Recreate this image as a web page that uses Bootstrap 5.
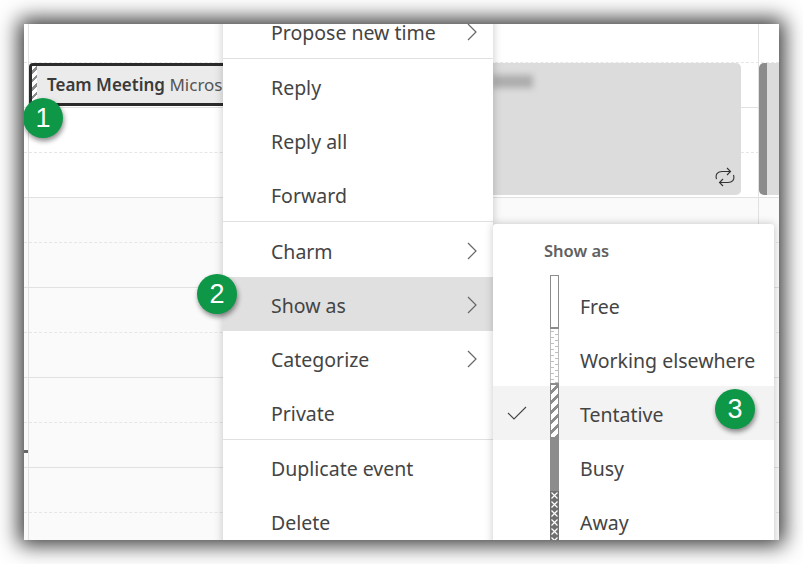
<!DOCTYPE html>
<html lang="en">
<head>
    <meta charset="UTF-8">
    <title>Show as</title>
    <link href="https://cdn.jsdelivr.net/npm/bootstrap@5.3.3/dist/css/bootstrap.min.css" rel="stylesheet">
    <style>
        body { background: #fff; font-family: "Noto Sans", sans-serif; min-height: 564px; padding: 24px 0 0 24px; }
        .shot { width: 755px; height: 516px; overflow: hidden; background: #fff; box-shadow: 0 0 20px 5px rgba(0,0,0,.8); }
        .shot-wrap { position: relative; width: 755px; height: 516px; }

        /* calendar grid */
        .cal-row { height: 45px; border-bottom: 1px solid #e1e1e1; }
        .cal-row.dash { border-bottom: 1px dashed #e6e6e6; }
        .cal-row.top { height: 39px; }
        .cal-row.off { background: #fafafa; }
        .v-line { position: absolute; top: 0; bottom: 0; width: 1px; background: #e1e1e1; }
        .v-left { left: 4px; }
        .v-right { left: 734px; }
        .tick { position: absolute; left: 0; top: 426px; width: 4px; height: 3px; background: #666; }

        /* events */
        .ev-tent { position: absolute; left: 5px; top: 39px; width: 194px; height: 43px; border: 3px solid #2b2b2b; border-right: 0; border-radius: 4px 0 0 4px; background: #ebebeb; font-size: 17px; color: #444; padding: 1px 0 0 15px; line-height: 35px; white-space: nowrap; overflow: hidden; }
        .ev-tent::before { content: ""; position: absolute; left: 0; top: 0; bottom: 0; width: 5px; background: repeating-linear-gradient(135deg, #fff 0 3.500px, #8c8c8c 3.500px 6px); }
        .ev-tent b { font-weight: 600; color: #3a3a3a; }
        .ev-tent span { color: #555; }
        .ev-busy { position: absolute; left: 460px; top: 39px; width: 257px; height: 132px; background: #dcdcdc; border-radius: 0 5px 5px 0; }
        .ev-blur { position: absolute; left: 8px; top: 12px; width: 41px; height: 13px; background: #adadad; filter: blur(3px); }
        .ev-icon { position: absolute; right: 6px; bottom: 8px; }
        .ev-next { position: absolute; left: 735px; top: 39px; width: 40px; height: 132px; background: #dcdcdc; border-left: 8px solid #8c8c8c; border-radius: 5px 0 0 5px; }

        /* menus */
        .menu-main, .menu-sub { border: 0; border-radius: 0; padding: 0; margin: 0; font-size: 19.5px; color: #444; box-shadow: 0 0 9px rgba(0,0,0,.22); }
        .menu-main { position: absolute; left: 199px; top: -20px; width: 270px; }
        .menu-sub { position: absolute; left: 469px; top: 200px; width: 281px; border-radius: 3px 3px 0 0; }
        .menu-main .dropdown-item, .menu-sub .dropdown-item { height: 54px; padding: 0; color: #444; display: flex; align-items: center; line-height: 1.05; }
        .menu-main .dropdown-item { padding: 5px 15px 0 48px; justify-content: space-between; }
        .menu-main .dropdown-item svg { margin-bottom: 4px; }
        .dropdown-divider.menu-rule { margin: 0; border-color: #e1e1e1; opacity: 1; }
        .rule-1 { height: 1px; }
        .rule-2 { height: 2px; }
        .dropdown-item.is-open { background: #e0e0e0; }
        .dropdown-item.is-sel { background: #f3f3f3; }
        .sub-title { height: 54px; padding: 0 0 0 51px; line-height: 54px; font-size: 16.500px; font-weight: 600; color: #616161; }
        .check-cell { width: 57px; display: flex; justify-content: center; padding-right: 9px; }
        .status-seg { width: 9px; align-self: stretch; margin: -3px 0 3px; flex: none; }
        .seg-free { background: #fff; border: 1px solid #8c8c8c; border-bottom-width: 2px; }
        .seg-work { border: 1px solid #bdbdbd; border-width: 0 1px; background-color: #fff; background-image: linear-gradient(#bfbfbf 0 1px, transparent 1px), linear-gradient(#bfbfbf 0 1px, transparent 1px); background-size: 3px 6px, 3px 6px; background-position: 0 2px, 4px 5px; background-repeat: repeat-y; }
        .seg-tent { border: 1px solid #8c8c8c; border-width: 2px 1px 0; background: repeating-linear-gradient(135deg, #fff 0 4px, #8c8c8c 4px 7px); }
        .seg-busy { background: #8c8c8c; }
        .seg-away { background: #6f6f6f; overflow: hidden; }
        .seg-away svg { display: block; }
        .item-label { margin-left: 21px; padding-top: 5px; }

        /* numbered callouts */
        .callout { position: absolute; z-index: 1001; width: 40px; height: 40px; border-radius: 50%; background: #0d9747; color: #fff; font-family: "Liberation Sans", sans-serif; font-size: 27px; line-height: 40px; text-align: center; box-shadow: 1px 3px 5px rgba(0,0,0,.45); }
        .call-1 { left: -1px; top: 74px; }
        .call-2 { left: 173px; top: 250px; }
        .call-3 { left: 691px; top: 365px; }
    </style>
</head>
<body>
    <div class="shot">
        <div class="shot-wrap">
            <div class="cal-lines">
                <div class="cal-row dash top"></div>
                <div class="cal-row"></div>
                <div class="cal-row dash"></div>
                <div class="cal-row"></div>
                <div class="cal-row dash off"></div>
                <div class="cal-row off"></div>
                <div class="cal-row dash off"></div>
                <div class="cal-row off"></div>
                <div class="cal-row dash off"></div>
                <div class="cal-row off"></div>
                <div class="cal-row dash off"></div>
                <div class="cal-row off"></div>
            </div>
            <div class="v-line v-left"></div>
            <div class="v-line v-right"></div>
            <div class="tick"></div>

            <div class="ev-tent"><b>Team Meeting</b> <span>Micros</span></div>
            <div class="ev-busy">
                <div class="ev-blur"></div>
                <svg class="ev-icon" width="20" height="20" viewBox="0 0 20 20" fill="none" stroke="#333" stroke-width="1.1">
                    <path d="M1.500 12 C0 7 3 4.500 7 4.500 H15 M12 1 L15.500 4.500 L12 8"/>
                    <path d="M18.500 8 C20 13 17 15.500 13 15.500 H5 M8 12 L4.500 15.500 L8 19"/>
                </svg>
            </div>
            <div class="ev-next"></div>

            <div class="dropdown-menu show menu-main">
                <a class="dropdown-item" href="#">Propose new time <svg width="11" height="18" viewBox="0 0 11 18" fill="none" stroke="#666" stroke-width="1.2"><path d="M1 1 L9 9 L1 17"/></svg></a>
                <hr class="dropdown-divider menu-rule rule-1">
                <a class="dropdown-item" href="#">Reply</a>
                <a class="dropdown-item" href="#">Reply all</a>
                <a class="dropdown-item" href="#">Forward</a>
                <hr class="dropdown-divider menu-rule rule-2">
                <a class="dropdown-item" href="#">Charm <svg width="11" height="18" viewBox="0 0 11 18" fill="none" stroke="#666" stroke-width="1.2"><path d="M1 1 L9 9 L1 17"/></svg></a>
                <a class="dropdown-item is-open" href="#">Show as <svg width="11" height="18" viewBox="0 0 11 18" fill="none" stroke="#666" stroke-width="1.2"><path d="M1 1 L9 9 L1 17"/></svg></a>
                <a class="dropdown-item" href="#">Categorize <svg width="11" height="18" viewBox="0 0 11 18" fill="none" stroke="#666" stroke-width="1.2"><path d="M1 1 L9 9 L1 17"/></svg></a>
                <a class="dropdown-item" href="#">Private</a>
                <hr class="dropdown-divider menu-rule rule-1">
                <a class="dropdown-item" href="#">Duplicate event</a>
                <a class="dropdown-item" href="#">Delete</a>
            </div>

            <div class="dropdown-menu show menu-sub">
                <div class="sub-title">Show as</div>
                <a class="dropdown-item" href="#"><span class="check-cell"></span><span class="status-seg seg-free"></span><span class="item-label">Free</span></a>
                <a class="dropdown-item" href="#"><span class="check-cell"></span><span class="status-seg seg-work"></span><span class="item-label">Working elsewhere</span></a>
                <a class="dropdown-item is-sel" href="#"><span class="check-cell"><svg width="20" height="14" viewBox="0 0 20 14" fill="none" stroke="#444" stroke-width="1.1"><path d="M1 7 L7 13 L19 1"/></svg></span><span class="status-seg seg-tent"></span><span class="item-label">Tentative</span></a>
                <a class="dropdown-item" href="#"><span class="check-cell"></span><span class="status-seg seg-busy"></span><span class="item-label">Busy</span></a>
                <a class="dropdown-item" href="#"><span class="check-cell"></span><span class="status-seg seg-away"><svg width="9" height="54" viewBox="0 0 9 54" fill="none"><defs><pattern id="xx" width="9" height="9" patternUnits="userSpaceOnUse"><path d="M1.500 1.500 L7.500 7.500 M7.500 1.500 L1.500 7.500" stroke="#fff" stroke-width="1.200"/></pattern></defs><rect width="9" height="54" fill="url(#xx)"/></svg></span><span class="item-label">Away</span></a>
            </div>

            <div class="callout call-1">1</div>
            <div class="callout call-2">2</div>
            <div class="callout call-3">3</div>
        </div>
    </div>
</body>
</html>
